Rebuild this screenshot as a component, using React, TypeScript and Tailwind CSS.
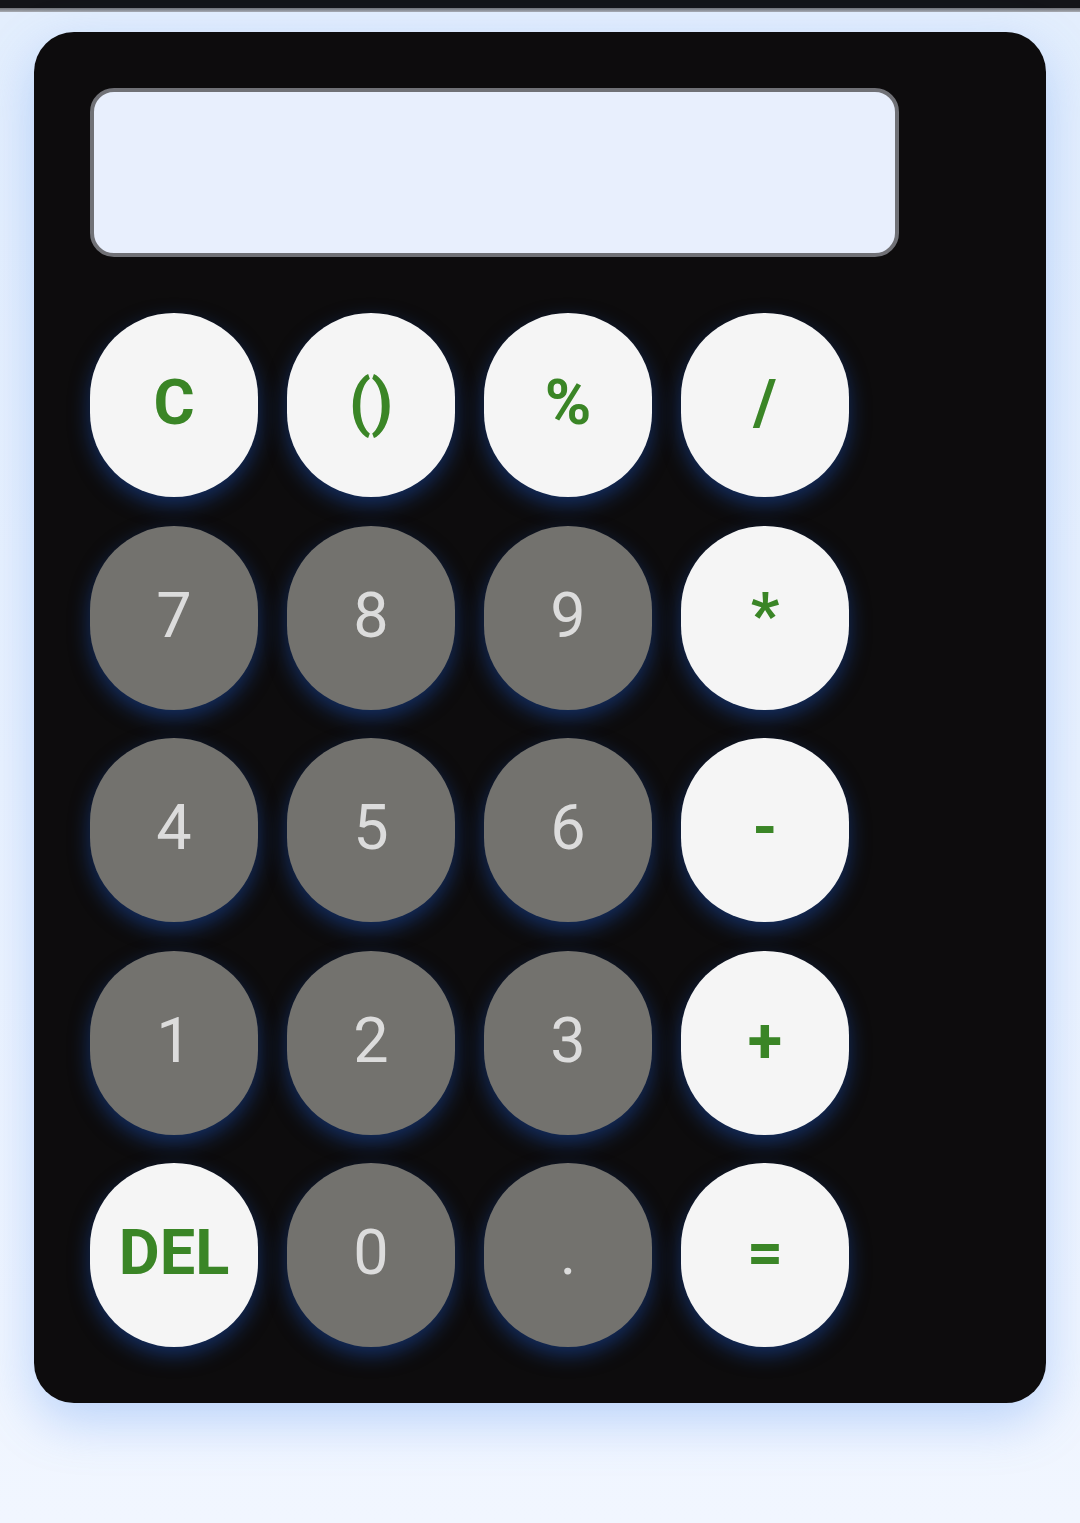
import React from "react";

type Key = { label: string; kind: "op" | "num" };

const keys: Key[] = [
  { label: "C", kind: "op" },
  { label: "()", kind: "op" },
  { label: "%", kind: "op" },
  { label: "/", kind: "op" },
  { label: "7", kind: "num" },
  { label: "8", kind: "num" },
  { label: "9", kind: "num" },
  { label: "*", kind: "op" },
  { label: "4", kind: "num" },
  { label: "5", kind: "num" },
  { label: "6", kind: "num" },
  { label: "-", kind: "op" },
  { label: "1", kind: "num" },
  { label: "2", kind: "num" },
  { label: "3", kind: "num" },
  { label: "+", kind: "op" },
  { label: "DEL", kind: "op" },
  { label: "0", kind: "num" },
  { label: ".", kind: "num" },
  { label: "=", kind: "op" },
];

export default function App() {
  return (
    <div
      className="w-[1080px] h-[1523px] bg-[#f0f6ff] flex flex-col overflow-hidden"
      style={{ fontFamily: "Roboto, 'Noto Sans', sans-serif" }}
    >
      <div className="h-[8px] bg-[#131418] shrink-0" />
      <div className="h-[4px] bg-gradient-to-b from-[#6f7177] to-[#a9adb4] shrink-0" />
      <div className="flex-1 bg-gradient-to-b from-[#e3eefd] via-[#eaf2fe] to-[#f1f6ff] pt-[20px] pl-[34px]">
        <div className="w-[1012px] h-[1371px] bg-[#0d0c0d] rounded-[40px] shadow-[0_18px_50px_rgba(90,150,240,0.35)] pt-[56px] pl-[56px]">
          <div className="w-[809px] h-[169px] rounded-[24px] border-4 border-[#707176] bg-[#e8effd]" />
          <div className="mt-[56px] grid grid-cols-[repeat(4,168px)] gap-x-[29px] gap-y-[28.5px]">
            {keys.map((k) => (
              <button
                key={k.label}
                className={
                  k.kind === "op"
                    ? "h-[184px] w-[168px] rounded-full bg-[#f5f5f5] text-[#3a8526] font-bold text-[63px] leading-none flex items-center justify-center pb-[5px] shadow-[0_8px_20px_rgba(25,75,170,0.55)]"
                    : "h-[184px] w-[168px] rounded-full bg-[#73726e] text-[#dcdcdc] font-normal text-[63px] leading-none flex items-center justify-center pb-[5px] shadow-[0_8px_20px_rgba(25,75,170,0.55)]"
                }
              >
                {k.label}
              </button>
            ))}
          </div>
        </div>
      </div>
    </div>
  );
}
